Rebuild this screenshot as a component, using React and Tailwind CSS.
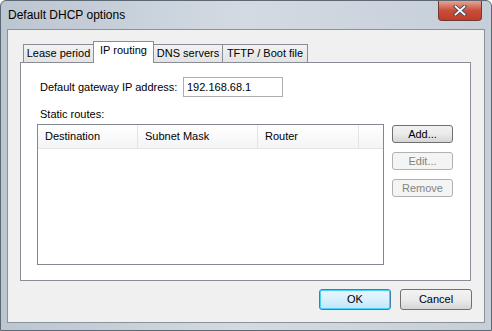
import React from 'react';

const tabs = [
  { label: 'Lease period', w: 'w-[71px]' },
  { label: 'IP routing', w: 'w-[61px]' },
  { label: 'DNS servers', w: 'w-[70px]' },
  { label: 'TFTP / Boot file', w: 'w-[86px]' },
];

const Button = ({ label, disabled, isDefault, className = '' }) => {
  let look = 'border-[#707070] bg-gradient-to-b from-[#f2f2f2] via-[#ebebeb] to-[#d5d5d5] text-black';
  if (disabled) look = 'border-[#adb2b5] bg-[#f4f4f4] text-[#838383]';
  if (isDefault) look = 'border-[#3c7fb1] bg-gradient-to-b from-[#eaf6fd] via-[#d9f0fc] to-[#bee6fd] text-black shadow-[inset_0_0_0_1px_#48d1fb]';
  return (
    <div className={`flex items-center justify-center rounded-[3px] border text-[11px] leading-none ${look} ${className}`}>
      {label}
    </div>
  );
};

const CloseButton = () => (
  <div className="mr-[9px] flex h-[20px] w-[44px] items-center justify-center rounded-b-[4px] border border-t-0 border-[#6d3a35] bg-gradient-to-b from-[#e8a393] via-[#c74f3b] to-[#c23a27]">
    <svg width="14" height="11" viewBox="0 0 14 11">
      <path d="M2.5 1.5 L11.5 9.5 M11.5 1.5 L2.5 9.5" stroke="#3b4a63" strokeWidth="3.6" strokeLinecap="square" />
      <path d="M2.5 1.5 L11.5 9.5 M11.5 1.5 L2.5 9.5" stroke="#ffffff" strokeWidth="1.8" strokeLinecap="square" />
    </svg>
  </div>
);

export default function App() {
  return (
    <div
      className="flex h-[331px] w-[492px] flex-col rounded-t-[6px] border border-[#5d6875] bg-gradient-to-r from-[#bcc6d1] via-[#d3dae2] to-[#c6ced8]"
      style={{ fontFamily: '"Liberation Sans", Arial, sans-serif' }}
    >
      {/* Title bar */}
      <div className="flex h-[28px] shrink-0 items-start justify-between">
        <div className="pl-[7px] pt-[8px] text-[12px] leading-none text-black">Default DHCP options</div>
        <CloseButton />
      </div>

      {/* Client area */}
      <div className="mx-[6px] mb-[7px] flex flex-1 flex-col border border-[#8a929c] bg-[#f0f0f0] pl-[12px] pr-[11px] pt-[11px]">
        {/* Tab strip */}
        <div className="flex h-[21px] items-end pl-[4px]">
          {tabs.map((t, i) =>
            i === 1 ? (
              <div
                key={t.label}
                className={`relative z-10 -mb-px -ml-px flex h-[22px] justify-center border border-b-0 border-[#898c95] bg-white pt-[3px] text-[11px] leading-none text-black ${t.w}`}
              >
                {t.label}
              </div>
            ) : (
              <div
                key={t.label}
                className={`-ml-px flex h-[18px] items-center justify-center whitespace-nowrap border border-b-0 border-[#898c95] bg-gradient-to-b from-[#f2f2f2] to-[#e3e3e3] text-[11px] leading-none text-black ${t.w}`}
              >
                {t.label}
              </div>
            )
          )}
        </div>

        {/* Tab panel */}
        <div className="flex h-[219px] w-[451px] flex-col border border-[#898c95] bg-white pl-[16px] pt-[14px]">
          <div className="flex items-center">
            <span className="w-[146px] whitespace-nowrap pl-[3px] text-[11px] text-black">Default gateway IP address:</span>
            <div className="flex h-[20px] w-[100px] items-center border border-[#abadb3] px-[3px] text-[11px] text-black">
              192.168.68.1
            </div>
          </div>
          <div className="mt-[12px] pl-[3px] text-[11px] leading-none text-black">Static routes:</div>
          <div className="mt-[4px] flex">
            <div className="flex h-[141px] w-[347px] flex-col border border-[#828790] bg-white">
              <div className="flex h-[24px] border-b border-[#e5e5e5] bg-gradient-to-b from-white to-[#f3f4f6] text-[11px] text-black">
                <div className="flex w-[100px] items-center border-r border-[#e3e5e8] pl-[7px]">Destination</div>
                <div className="flex w-[120px] items-center border-r border-[#e3e5e8] pl-[7px]">Subnet Mask</div>
                <div className="flex w-[101px] items-center border-r border-[#e3e5e8] pl-[7px]">Router</div>
                <div className="flex-1" />
              </div>
            </div>
            <div className="ml-[8px] flex flex-col gap-[9px] pt-[1px]">
              <Button label="Add..." className="h-[18px] w-[61px]" />
              <Button label="Edit..." disabled className="h-[18px] w-[61px]" />
              <Button label="Remove" disabled className="h-[18px] w-[61px]" />
            </div>
          </div>
        </div>

        {/* Dialog buttons */}
        <div className="mt-[8px] flex justify-end gap-[9px] pr-[1px]">
          <Button label="OK" isDefault className="h-[21px] w-[72px]" />
          <Button label="Cancel" className="h-[21px] w-[72px]" />
        </div>
      </div>
    </div>
  );
}
